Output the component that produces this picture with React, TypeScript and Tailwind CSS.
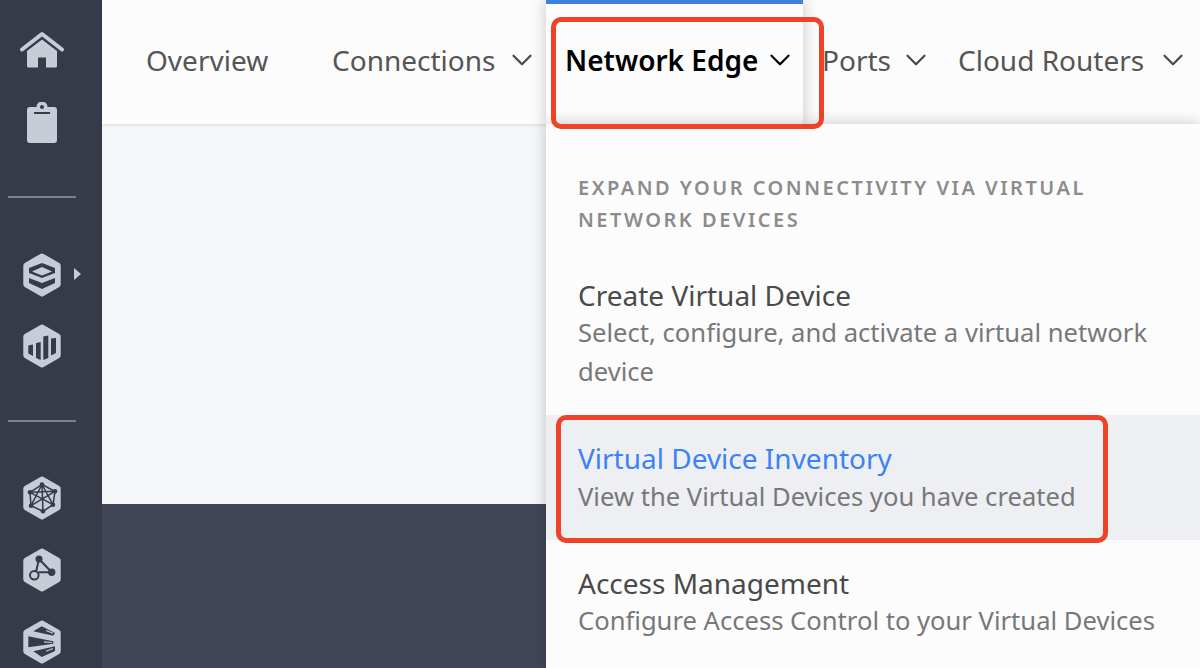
import React from 'react';
import { ChevronDown } from 'lucide-react';

const HEX = 'M20 1.5a3 3 0 0 1 1.6.4l15.6 9.2a3 3 0 0 1 1.5 2.6v18.6a3 3 0 0 1-1.5 2.6L21.6 44.1a3 3 0 0 1-3.2 0L2.8 34.9a3 3 0 0 1-1.5-2.6V13.7a3 3 0 0 1 1.5-2.6L18.4 1.9a3 3 0 0 1 1.6-.4z';

const HexIcon: React.FC<{ children: React.ReactNode; className?: string }> = ({ children, className }) => (
  <svg width="40" height="46" viewBox="0 0 40 46" className={className}>
    <path d={HEX} fill="#c8ccd7" />
    <g fill="#373b49" stroke="#373b49">{children}</g>
  </svg>
);

const Divider: React.FC<{ className?: string }> = ({ className }) => (
  <div className={`w-[68px] h-0.5 bg-[#7d818d] ${className ?? ''}`} />
);

const Sidebar: React.FC = () => (
  <aside className="w-[102px] h-full shrink-0 bg-[#373b49] flex flex-col items-center pr-[18px] overflow-hidden">
    <svg width="46" height="38" viewBox="0 0 46 38" className="mt-[31px] shrink-0">
      <path d="M3 18.500 23 3l20 15.500" fill="none" stroke="#c8ccd7" strokeWidth="4" strokeLinecap="round" strokeLinejoin="round" />
      <path d="M8 20 23 8.500 38 20v15a1.500 1.500 0 0 1-1.500 1.500H27V26.500h-8V36.500H9.500A1.500 1.500 0 0 1 8 35z" fill="#c8ccd7" />
    </svg>
    <svg width="30" height="41" viewBox="0 0 30 41" className="mt-[33px] shrink-0">
      <path d="M3 5h6.500a5.500 5.500 0 0 1 11 0H27a3 3 0 0 1 3 3v30a3 3 0 0 1-3 3H3a3 3 0 0 1-3-3V8a3 3 0 0 1 3-3z" fill="#c8ccd7" />
      <circle cx="15" cy="5" r="2" fill="#373b49" />
      <rect x="7" y="10" width="16" height="2" fill="#373b49" />
    </svg>
    <Divider className="mt-[53px] shrink-0" />
    <div className="relative mt-[54px] shrink-0">
      <HexIcon>
        <path d="M7 16 20 11l13 5v5l-13 5-13-5zM10 19.500l10 4 10-4-10-4.500z" stroke="none" fillRule="evenodd" />
        <path d="M7 26l13 5 13-5v5l-13 6-13-6z" stroke="none" />
      </HexIcon>
      <div className="absolute left-[52px] top-[16px] w-0 h-0 border-y-[6px] border-y-transparent border-l-[7px] border-l-[#c8ccd7]" />
    </div>
    <HexIcon className="mt-[25px] shrink-0">
      <path d="M6.300 22.500 11 21.500V33L6.300 30.500z" stroke="none" />
      <path d="M14 20 18.700 19V37L14 35z" stroke="none" />
      <path d="M21.300 13.500 26.300 12.500V35L21.300 37z" stroke="none" />
      <path d="M29 15.500 34 15V30L29 32.500z" stroke="none" />
    </HexIcon>
    <Divider className="mt-[51px] shrink-0" />
    <HexIcon className="mt-[53px] shrink-0">
      <g fill="none" strokeWidth="1.500">
        <path d="M20 9.500 33 16.300 31 29.700 21 36.300 9 30.700 8 17.300z" />
        <path d="M20 9.500 31 29.700M20 9.500 9 30.700M8 17.300 33 16.300M8 17.300 31 29.700M33 16.300 9 30.700M20 9.500 21 36.300" />
      </g>
      <g stroke="none">
        <circle cx="20" cy="9.500" r="2.300" />
        <circle cx="33" cy="16.300" r="2.300" />
        <circle cx="31" cy="29.700" r="2.300" />
        <circle cx="21" cy="36.300" r="2.300" />
        <circle cx="9" cy="30.700" r="2.300" />
        <circle cx="8" cy="17.300" r="2.300" />
      </g>
    </HexIcon>
    <HexIcon className="mt-[26px] shrink-0">
      <g fill="none" strokeWidth="2">
        <path d="M17 12 14 25M17 12 29.700 25.300H16.500" />
        <circle cx="12.300" cy="28.300" r="4.300" />
      </g>
      <circle cx="17" cy="12" r="3.500" stroke="none" />
      <circle cx="29.700" cy="25.300" r="3.700" stroke="none" />
    </HexIcon>
    <HexIcon className="mt-[26px] shrink-0">
      <path d="M19.700 7.300 33 14l-1.700 2.700-20-4.400z" stroke="none" />
      <path d="M6.300 17.300 31.300 22.300v2.400L6.300 28.300z" stroke="none" />
      <path d="M11.300 32.300 33 27.300V32L19.700 38z" stroke="none" />
      <path d="M24 11.500 31 14.300M22 22.800 30 23.500M24 32.300 31 29.500" stroke="#c8ccd7" strokeWidth="1.200" fill="none" />
    </HexIcon>
  </aside>
);

const NavItem: React.FC<{ label: string; chevronGap?: string; chevronColor?: string; className?: string }> = ({ label, chevronGap, chevronColor, className }) => (
  <div className={`flex items-center shrink-0 ${className ?? ''}`}>
    <span>{label}</span>
    {chevronGap && <ChevronDown size={34} strokeWidth={1.6} className={`${chevronGap} ${chevronColor ?? 'text-[#4a4a4a]'}`} />}
  </div>
);

const MenuRow: React.FC<{ title: string; desc: string; active?: boolean; className?: string }> = ({ title, desc, active, className }) => (
  <div className={`px-8 ${active ? 'bg-[#eeeff3]' : ''} ${className ?? ''}`}>
    <div className={`text-[28px] leading-[37px] ${active ? 'text-[#3b82f6]' : 'text-[#4a4a4a]'}`}>{title}</div>
    <div className={`text-[25.6px] leading-[39px] text-[#787878] ${active ? '' : '-mt-px'}`}>{desc}</div>
  </div>
);

const App: React.FC = () => (
  <div className="relative w-[1200px] h-[668px] overflow-hidden flex font-['Noto_Sans',sans-serif]">
    <Sidebar />
    <div className="flex-1 min-w-0 h-full flex flex-col">
      <header className="relative h-[124px] shrink-0 bg-[#fcfcfc] shadow-[0_1px_4px_rgba(0,0,0,0.12)] flex items-start pt-[37px] pl-[44px] text-[28px] leading-[46px] text-[#555555]">
        <NavItem label="Overview" className="w-[186px]" />
        <NavItem label="Connections" chevronGap="ml-2.5" className="w-[234px]" />
        <div className="absolute left-[444px] top-0 w-[257px] h-[124px] bg-[#fcfcfc] border-t-4 border-[#3f7fe0] shadow-[0_0_14px_rgba(0,0,0,0.22)] z-10 pt-[33px] pl-[19px]">
          <NavItem label="Network Edge" chevronGap="ml-[5px]" chevronColor="text-black" className="text-black font-semibold" />
        </div>
        <NavItem label="Ports" chevronGap="ml-2" className="ml-[256px] w-[136px]" />
        <NavItem label="Cloud Routers" chevronGap="ml-3" />
      </header>
      <div className="h-[380px] shrink-0 bg-[#f6f7f9]" />
      <div className="flex-1 bg-[#414659]" />
    </div>
    <div className="absolute left-[546px] top-[124px] w-[654px] h-[544px] bg-[#fcfcfc] shadow-[0_0_14px_rgba(0,0,0,0.22)] z-10 pt-[48px]">
      <div className="px-8 text-[20px] leading-8 font-semibold tracking-[2.5px] text-[#8c8c8c]">
        EXPAND YOUR CONNECTIVITY VIA VIRTUAL
        <br />
        NETWORK DEVICES
      </div>
      <MenuRow className="mt-[41px] h-[138px]" title="Create Virtual Device" desc="Select, configure, and activate a virtual network device" />
      <MenuRow className="h-[125px] pt-[25px]" active title="Virtual Device Inventory" desc="View the Virtual Devices you have created" />
      <MenuRow className="pt-[25px]" title="Access Management" desc="Configure Access Control to your Virtual Devices" />
    </div>
    <div className="absolute left-[551px] top-[17px] w-[273px] h-[112px] rounded-[10px] border-[5px] border-[#ee4327] z-20" />
    <div className="absolute left-[556px] top-[415px] w-[552px] h-[128px] rounded-[10px] border-[5px] border-[#ee4327] z-20" />
  </div>
);

export default App;
